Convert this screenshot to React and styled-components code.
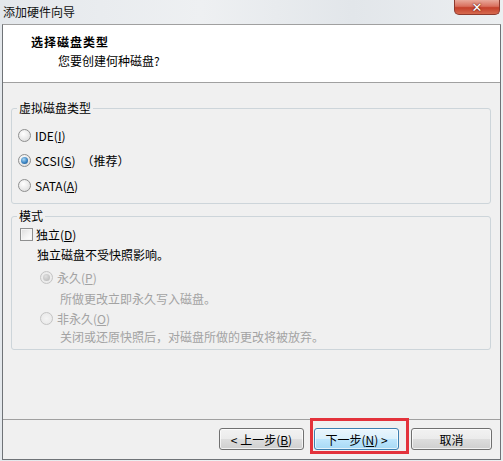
import React from 'react';
import styled, { createGlobalStyle } from 'styled-components';

const GlobalStyle = createGlobalStyle`
  * { box-sizing: border-box; }
  html, body { margin: 0; padding: 0; background: #e9ecef; }
  body {
    font-family: "Noto Sans CJK SC", "Noto Sans", sans-serif;
    font-size: 12px;
    color: #000;
  }
`;

const Window = styled.div`
  width: 503px;
  height: 461px;
  display: flex;
  flex-direction: column;
  background: linear-gradient(90deg, #e4e8ec 0%, #eef0f2 40%, #e2e6ea 70%, #eceff1 100%);
  padding: 0 2px 1px 2px;
`;

const TitleBar = styled.div`
  height: 24px;
  flex: none;
  display: flex;
  align-items: flex-start;
  justify-content: space-between;
`;

const TitleText = styled.span`
  line-height: 24px;
  padding-left: 1px;
  color: #111;
`;

const CloseButton = styled.div`
  width: 46px;
  height: 15px;
  margin-right: 1px;
  border: 1px solid #8d3a2e;
  border-top: none;
  border-radius: 0 0 5px 5px;
  background: linear-gradient(#e9a99b 0%, #d9705e 45%, #c4402b 55%, #d66a4f 100%);
  display: flex;
  align-items: center;
  justify-content: center;
  color: #fff;
  font-family: "DejaVu Sans", sans-serif;
  font-weight: bold;
  font-size: 13px;
  line-height: 1;
  text-shadow: 0 0 2px #6b1d12, 0 0 1px #6b1d12;
`;

const Client = styled.div`
  flex: 1;
  display: flex;
  flex-direction: column;
  border: 1px solid #6f7377;
  border-top-color: #a0a0a0;
  background: #f0f0f0;
`;

const Header = styled.div`
  height: 58px;
  flex: none;
  background: #fff;
  border-bottom: 1px solid #a0a0a0;
  padding: 9px 0 0 28px;
`;

const HeaderTitle = styled.div`
  font-weight: bold;
  line-height: 16px;
  letter-spacing: 1px;
`;

const HeaderSub = styled.div`
  line-height: 16px;
  margin-top: 3px;
  padding-left: 27px;
`;

const Body = styled.div`
  flex: 1;
  padding: 17px 9px 0 8px;
  display: flex;
  flex-direction: column;
  gap: 4px;
`;

const Group = styled.fieldset`
  margin: 0;
  padding: 0;
  height: ${p => p.$h}px;
  border: 1px solid #cdd5da;
  border-radius: 3px;
  min-width: 0;
`;

const Legend = styled.legend`
  margin-left: 5px;
  padding: 0 2px;
  line-height: 16px;
`;

const Row = styled.div`
  display: flex;
  align-items: center;
  height: ${p => p.$h || 25}px;
  margin-top: ${p => p.$mt || 0}px;
  padding-left: ${p => p.$indent}px;
  color: ${p => (p.$disabled ? '#a3a3a3' : '#000')};
  gap: ${p => p.$gap || 4}px;
`;

const Radio = styled.span`
  width: 13px;
  height: 13px;
  flex: none;
  border-radius: 50%;
  border: 1px solid ${p => (p.$disabled ? '#c4c4c4' : '#8e8f8f')};
  background: ${p => (p.$disabled
    ? 'radial-gradient(circle at 50% 50%, #f4f4f4 0%, #e6e6e6 100%)'
    : 'radial-gradient(circle at 40% 35%, #ffffff 0%, #e3e3e3 70%, #cfcfcf 100%)')};
  display: flex;
  align-items: center;
  justify-content: center;

  &::after {
    content: '';
    display: ${p => (p.$checked ? 'block' : 'none')};
    width: 7px;
    height: 7px;
    border-radius: 50%;
    background: ${p => (p.$disabled
      ? 'radial-gradient(circle at 40% 35%, #e0e0e0 0%, #b4b4b4 100%)'
      : 'radial-gradient(circle at 40% 35%, #a8d8f5 0%, #3a83c2 55%, #1d4f80 100%)')};
  }
`;

const Checkbox = styled.span`
  width: 13px;
  height: 13px;
  flex: none;
  border: 1px solid #8e8f8f;
  background: linear-gradient(135deg, #dcdcdc 0%, #f4f4f4 60%, #ffffff 100%);
  box-shadow: inset 0 0 0 1px #f4f4f4;
`;

const Note = styled.span`
  margin-left: ${p => p.$ml || 0}px;
`;

const Footer = styled.div`
  height: 40px;
  flex: none;
  border-top: 1px solid #a0a0a0;
  display: flex;
  justify-content: flex-end;
  align-items: flex-start;
  padding: 8px 8px 0 0;
`;

const Button = styled.button`
  width: ${p => p.$w || 85}px;
  height: 22px;
  margin-left: ${p => p.$ml || 0}px;
  border: 1px solid ${p => (p.$default ? '#3c7fb1' : '#707070')};
  border-radius: 3px;
  font: inherit;
  font-size: 12px;
  color: #000;
  padding: 0;
  background: ${p => (p.$default
    ? 'linear-gradient(#eaf6fd 0%, #d9f0fc 50%, #bee6fd 51%, #a7d9f5 100%)'
    : 'linear-gradient(#f2f2f2 0%, #ebebeb 50%, #dddddd 51%, #cfcfcf 100%)')};
  box-shadow: inset 0 0 0 1px rgba(255, 255, 255, 0.7);
`;

const Highlight = styled.span`
  position: relative;
  margin-left: 10px;
  display: inline-flex;

  &::after {
    content: '';
    position: absolute;
    top: -10px;
    left: -4px;
    right: -10px;
    bottom: -4px;
    border: 3px solid #e3323b;
    pointer-events: none;
  }
`;

export default function App() {
  return (
    <>
      <GlobalStyle />
      <Window>
        <TitleBar>
          <TitleText>添加硬件向导</TitleText>
          <CloseButton>✕</CloseButton>
        </TitleBar>
        <Client>
          <Header>
            <HeaderTitle>选择磁盘类型</HeaderTitle>
            <HeaderSub>您要创建何种磁盘?</HeaderSub>
          </Header>
          <Body>
            <Group $h={104}>
              <Legend>虚拟磁盘类型</Legend>
              <Row $indent={6} $mt={7}>
                <Radio />
                <span>IDE(<u>I</u>)</span>
              </Row>
              <Row $indent={6}>
                <Radio $checked />
                <span>SCSI(<u>S</u>)</span>
                <Note $ml={2}>（推荐）</Note>
              </Row>
              <Row $indent={6}>
                <Radio />
                <span>SATA(<u>A</u>)</span>
              </Row>
            </Group>
            <Group $h={142}>
              <Legend>模式</Legend>
              <Row $indent={8} $h={20} $gap={3}>
                <Checkbox />
                <span>独立(<u>D</u>)</span>
              </Row>
              <Row $indent={25} $h={20}>
                <span>独立磁盘不受快照影响。</span>
              </Row>
              <Row $indent={28} $h={20} $mt={3} $disabled>
                <Radio $checked $disabled />
                <span>永久(<u>P</u>)</span>
              </Row>
              <Row $indent={48} $h={20} $mt={1} $disabled>
                <span>所做更改立即永久写入磁盘。</span>
              </Row>
              <Row $indent={28} $h={20} $disabled>
                <Radio $disabled />
                <span>非永久(<u>O</u>)</span>
              </Row>
              <Row $indent={48} $h={19} $mt={-1} $disabled>
                <span>关闭或还原快照后，对磁盘所做的更改将被放弃。</span>
              </Row>
            </Group>
          </Body>
          <Footer>
            <Button>&lt; 上一步(<u>B</u>)</Button>
            <Highlight>
              <Button $default>下一步(<u>N</u>) &gt;</Button>
            </Highlight>
            <Button $ml={12} $w={81}>取消</Button>
          </Footer>
        </Client>
      </Window>
    </>
  );
}
